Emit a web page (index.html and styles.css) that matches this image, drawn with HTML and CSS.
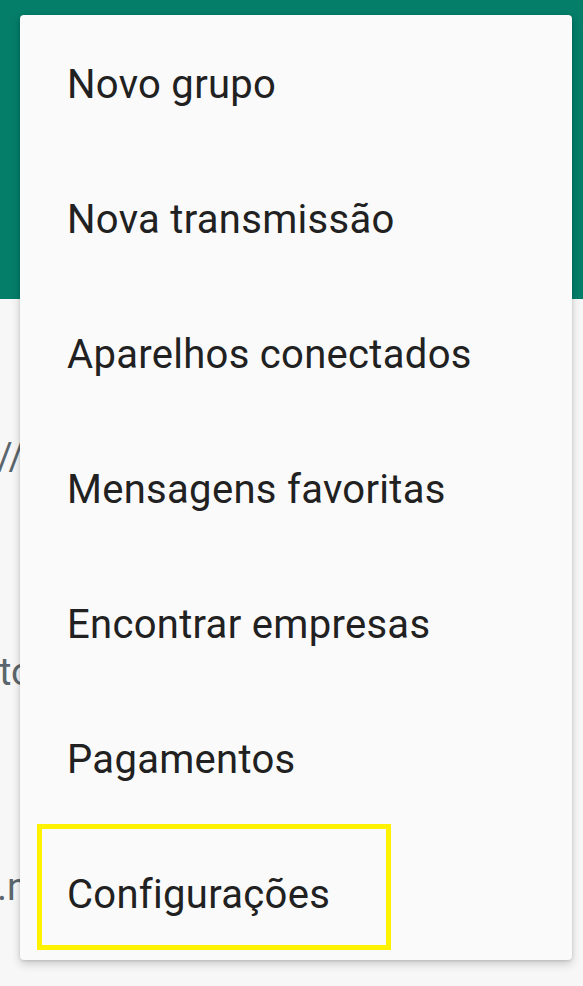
FILE: index.html
```html
<!DOCTYPE html>
<html lang="pt">
<head>
<meta charset="utf-8">
<link rel="stylesheet" href="styles.css">
</head>
<body>
<div class="screen">
  <header class="appbar"></header>
  <main class="chat-list">
    <div class="bg-row row-1">//p</div>
    <div class="bg-row row-2">to</div>
    <div class="bg-row row-3">.n</div>
  </main>

  <nav class="menu">
    <div class="menu-item">Novo grupo</div>
    <div class="menu-item">Nova transmissão</div>
    <div class="menu-item">Aparelhos conectados</div>
    <div class="menu-item">Mensagens favoritas</div>
    <div class="menu-item">Encontrar empresas</div>
    <div class="menu-item">Pagamentos</div>
    <div class="menu-item">Configurações</div>
  </nav>
  <div class="highlight"></div>
</div>
</body>
</html>
```
FILE: styles.css
```css
html, body {
  margin: 0;
  padding: 0;
}
body {
  width: 583px;
  height: 986px;
  overflow: hidden;
  background: #f7f7f7;
  font-family: Roboto, "Noto Sans", sans-serif;
}
.screen {
  position: relative;
  width: 583px;
  height: 986px;
}
.appbar {
  height: 299px;
  background: #047d69;
}
.chat-list {
  display: flex;
  flex-direction: column;
}
.bg-row {
  font-size: 38px;
  color: #5b666c;
  white-space: nowrap;
  height: 40px;
  line-height: 40px;
}
.row-1 { margin-top: 138px; margin-left: -3px; }
.row-2 { margin-top: 175px; margin-left: -1px; }
.row-3 { margin-top: 175px; margin-left: -3px; }

.menu {
  position: absolute;
  top: 15px;
  left: 20px;
  width: 552px;
  height: 945px;
  background: #fafafa;
  border-radius: 4px;
  box-shadow: 0 4px 10px rgba(0,0,0,0.18), 0 1px 3px rgba(0,0,0,0.12);
  display: flex;
  flex-direction: column;
  padding-top: 2px;
  box-sizing: border-box;
}
.menu-item {
  height: 135px;
  line-height: 135px;
  padding-left: 47px;
  font-size: 40px;
  letter-spacing: 0.3px;
  color: #212121;
  white-space: nowrap;
}
.highlight {
  position: absolute;
  left: 37px;
  top: 824px;
  width: 344px;
  height: 116px;
  border: 5px solid #fff200;
}
```
